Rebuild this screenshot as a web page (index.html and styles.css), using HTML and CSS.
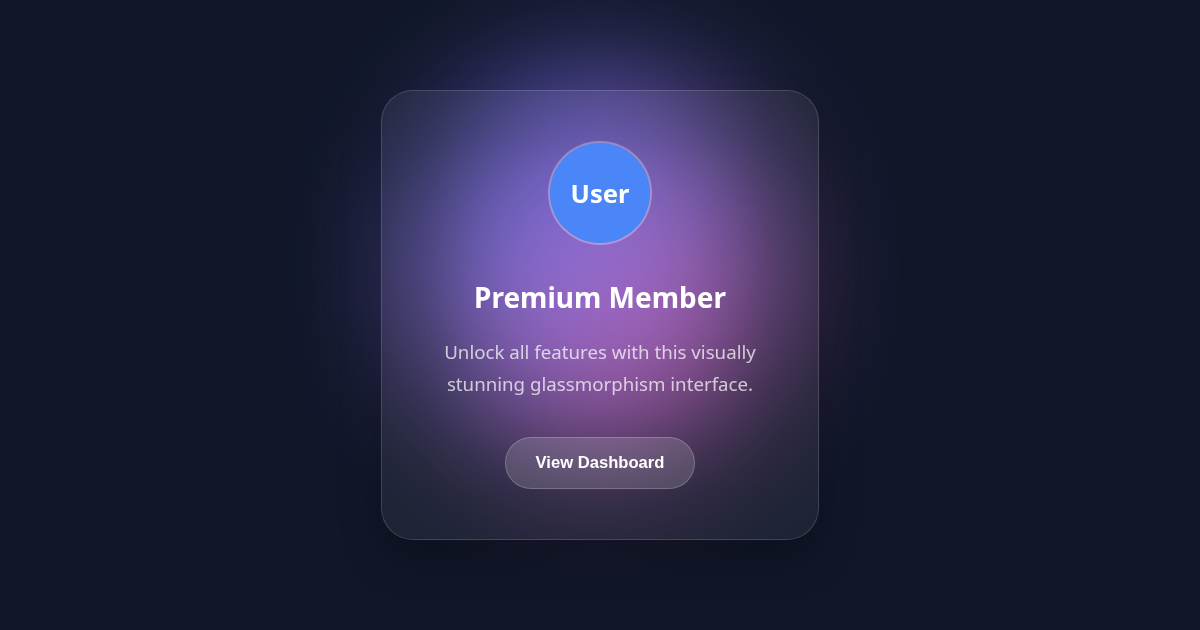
FILE: index.html
```html
<!DOCTYPE html>
<html lang="en">
<head>
<meta charset="utf-8">
<title>Premium Member</title>
<link rel="stylesheet" href="styles.css">
</head>
<body>
<div class="stage">
  <div class="glow"></div>
  <div class="card">
    <div class="avatar">User</div>
    <h2 class="title">Premium Member</h2>
    <p class="desc">Unlock all features with this visually stunning glassmorphism interface.</p>
    <button class="btn">View Dashboard</button>
  </div>
</div>
</body>
</html>
```
FILE: styles.css
```css
html, body {
  margin: 0;
  padding: 0;
  height: 100%;
}
body {
  background: #111729;
  font-family: "Noto Sans", "Open Sans", sans-serif;
  overflow: hidden;
}
.stage {
  position: relative;
  height: 100%;
  display: flex;
  align-items: center;
  justify-content: center;
}
.glow {
  position: absolute;
  left: 420px;
  top: 80px;
  width: 350px;
  height: 370px;
  border-radius: 50%;
  background: linear-gradient(140deg, #5560e6 0%, #8a6ad8 45%, #dc4c98 100%);
  filter: blur(65px);
  opacity: 0.95;
}
.card {
  position: relative;
  width: 340px;
  padding: 50px 48px 50px;
  border-radius: 32px;
  background: rgba(255, 255, 255, 0.06);
  border: 1px solid rgba(255, 255, 255, 0.15);
  backdrop-filter: blur(24px);
  box-shadow: 0 20px 40px rgba(0, 0, 0, 0.25);
  display: flex;
  flex-direction: column;
  align-items: center;
  text-align: center;
}
.avatar {
  width: 100px;
  height: 100px;
  border-radius: 50%;
  background: #4a86f7;
  background-clip: padding-box;
  border: 2px solid rgba(255, 255, 255, 0.3);
  color: #fff;
  font-weight: 700;
  font-size: 25.6px;
  display: flex;
  align-items: center;
  justify-content: center;
}
.title {
  margin: 33px 0 0;
  font-size: 28px;
  line-height: 38px;
  font-weight: 700;
  color: #fff;
}
.desc {
  margin: 20px 0 0;
  font-size: 18.7px;
  line-height: 32px;
  color: rgba(255, 255, 255, 0.72);
}
.btn {
  margin-top: 37px;
  font-family: "Liberation Sans", Arial, sans-serif;
  font-weight: 700;
  font-size: 16.6px;
  color: #fff;
  padding: 15px 30px;
  border-radius: 999px;
  background: rgba(255, 255, 255, 0.15);
  border: 1px solid rgba(255, 255, 255, 0.2);
}
```
